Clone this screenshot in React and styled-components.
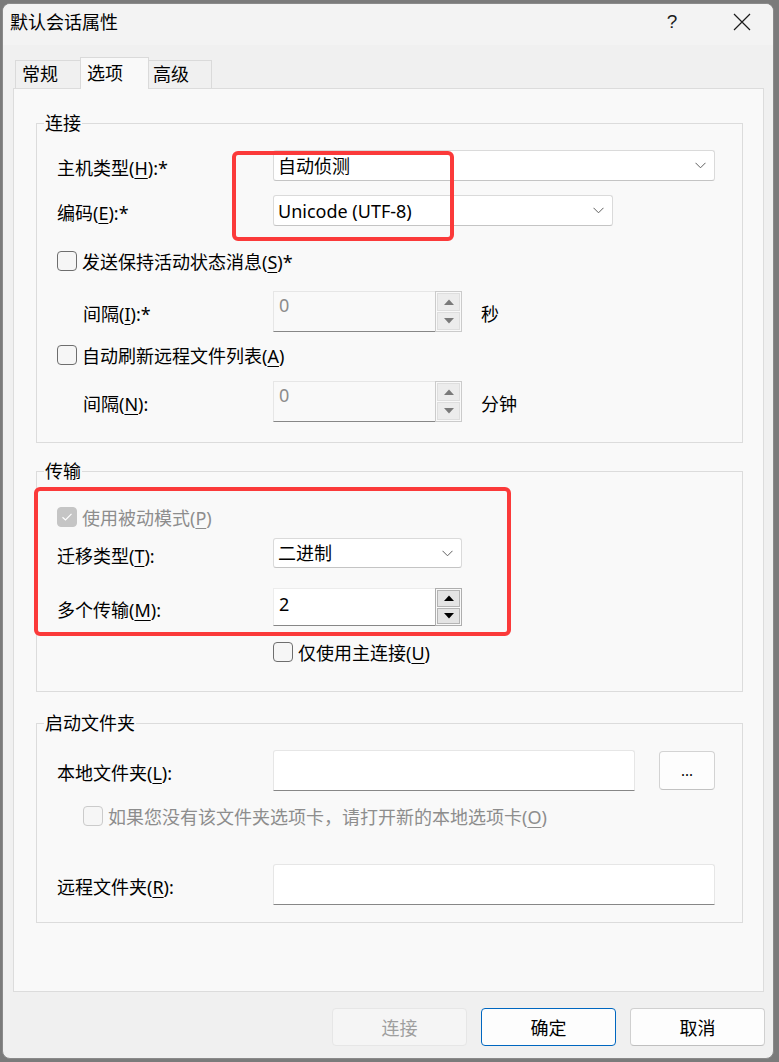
import React from "react";
import styled, { createGlobalStyle } from "styled-components";

const GlobalStyle = createGlobalStyle`
  * {
    box-sizing: border-box;
  }
  html, body {
    margin: 0;
    padding: 0;
    background: #7b7b7b;
  }
  body {
    width: 779px;
    height: 1062px;
    overflow: hidden;
    font-family: "Noto Sans", "Noto Sans CJK SC", sans-serif;
    font-size: 18px;
    color: #000;
  }
  u {
    text-decoration-thickness: 1px;
    text-underline-offset: 3px;
  }
`;

const Window = styled.div`
  position: relative;
  margin: 3px 0 0 2px;
  width: 772px;
  height: 1056px;
  border: 1px solid #8a8a8a;
  border-radius: 8px;
  background: #f0f0f0;
  overflow: hidden;
  display: flex;
  flex-direction: column;
`;

const TitleBar = styled.div`
  height: 41px;
  background: #f3f3f3;
  display: flex;
  align-items: flex-start;
  padding: 6px 8px 0 7px;
`;

const Title = styled.div`
  line-height: 24px;
  flex: 1;
`;

const TitleButtons = styled.div`
  display: flex;
  gap: 24px;
`;

const TitleButton = styled.div`
  width: 46px;
  height: 24px;
  display: flex;
  align-items: center;
  justify-content: center;
  font-family: "Liberation Sans", sans-serif;
  font-size: 19px;
  font-weight: 300;
  color: #1b1b1b;
`;

const Content = styled.div`
  flex: 1;
  padding: 12px 8px 0 10px;
  display: flex;
  flex-direction: column;
`;

const TabStrip = styled.div`
  height: 31px;
  display: flex;
  align-items: flex-end;
  padding-left: 2px;
`;

const Tab = styled.div`
  position: relative;
  z-index: ${(p) => (p.$active ? 2 : 1)};
  width: ${(p) => p.$w}px;
  height: ${(p) => (p.$active ? 32 : 28)}px;
  margin-right: -1px;
  margin-bottom: ${(p) => (p.$active ? -1 : 0)}px;
  padding-left: ${(p) => p.$pl}px;
  padding-top: ${(p) => (p.$active ? 2 : 0)}px;
  border: 1px solid #dadada;
  border-bottom: none;
  background: ${(p) => (p.$active ? "#f9f9f9" : "#f0f0f0")};
  line-height: 26px;
`;

const Panel = styled.div`
  width: 751px;
  height: 904px;
  border: 1px solid #dcdcdc;
  background: #f9f9f9;
  padding: 22px 20px 0 22px;
  display: flex;
  flex-direction: column;
`;

const Group = styled.fieldset`
  margin: ${(p) => p.$mt || 0}px 0 0 0;
  padding: ${(p) => p.$pt}px 20px ${(p) => p.$pb}px 20px;
  border: 1px solid #dcdcdc;
  min-width: 0;
`;

const GroupTitle = styled.legend`
  padding: 0 1px;
  margin-left: -13px;
  line-height: 24px;
`;

const Row = styled.div`
  display: flex;
  align-items: center;
  height: ${(p) => p.$h}px;
  margin-top: ${(p) => p.$mt || 0}px;
  padding-left: ${(p) => p.$indent || 0}px;
`;

const Label = styled.div`
  width: ${(p) => 216 - (p.$indent || 0)}px;
  margin-left: ${(p) => p.$indent || 0}px;
  padding-top: 3px;
  white-space: nowrap;
`;

const Combo = styled.div`
  width: ${(p) => p.$w}px;
  height: 100%;
  background: #fff;
  border: 1px solid #dadada;
  border-bottom-color: #c4c4c4;
  border-radius: 3px;
  display: flex;
  align-items: center;
  justify-content: space-between;
  padding: 0 8px 0 4px;
  line-height: 24px;
`;

const Chevron = () => (
  <svg width="11" height="7" viewBox="0 0 11 7">
    <path d="M0.5 0.8 L5.5 5.8 L10.5 0.8" fill="none" stroke="#5f5f5f" strokeWidth="1" />
  </svg>
);

const Spin = styled.div`
  width: 189px;
  height: 100%;
  display: flex;
`;

const SpinField = styled.div`
  flex: 1;
  background: ${(p) => (p.$disabled ? "#f9f9f9" : "#fff")};
  border: 1px solid ${(p) => (p.$disabled ? "#e6e6e6" : "#ececec")};
  border-bottom-color: #878787;
  border-right: none;
  padding: ${(p) => (p.$disabled ? 1 : 3)}px 0 0 5px;
  line-height: 24px;
  color: ${(p) => (p.$disabled ? "#8c8c8c" : "#000")};
`;

const SpinButtons = styled.div`
  width: 27px;
  display: flex;
  flex-direction: column;
  gap: 1px;
  padding: 1px;
  border: 1px solid ${(p) => (p.$disabled ? "#cbcbcb" : "#aeaeae")};
`;

const SpinButton = styled.div`
  flex: 1;
  display: flex;
  align-items: center;
  justify-content: center;
  border: 1px solid ${(p) => (p.$disabled ? "#dedede" : "#b4b4b4")};
  background: ${(p) => (p.$disabled ? "#ececec" : "#e4e4e4")};
`;

const Arrow = ({ up, disabled }) => (
  <svg width="10" height="6" viewBox="0 0 10 6">
    <path
      d={up ? "M0 6 L5 0.5 L10 6 Z" : "M0 0 L5 5.5 L10 0 Z"}
      fill={disabled ? "#7a7a7a" : "#000"}
    />
  </svg>
);

const SpinBox = ({ value, disabled }) => (
  <Spin>
    <SpinField $disabled={disabled}>{value}</SpinField>
    <SpinButtons $disabled={disabled}>
      <SpinButton $disabled={disabled}>
        <Arrow up disabled={disabled} />
      </SpinButton>
      <SpinButton $disabled={disabled}>
        <Arrow disabled={disabled} />
      </SpinButton>
    </SpinButtons>
  </Spin>
);

const Unit = styled.span`
  margin-left: 19px;
  padding-top: 2px;
`;

const TextField = styled.div`
  width: ${(p) => p.$w}px;
  height: 100%;
  background: #fff;
  border: 1px solid #e6e6e6;
  border-bottom-color: #878787;
  border-radius: 3px 3px 0 0;
`;

const BrowseButton = styled.div`
  width: 56px;
  height: 39px;
  margin-left: 24px;
  background: #fdfdfd;
  border: 1px solid #d3d3d3;
  border-bottom-color: #c2c2c2;
  border-radius: 4px;
  display: flex;
  align-items: center;
  justify-content: center;
  font-size: 15px;
  padding-bottom: 2px;
`;

const CheckLine = styled.label`
  display: flex;
  align-items: center;
  gap: 5px;
  color: ${(p) => (p.$disabled ? "#8d8d8d" : "#000")};
  white-space: nowrap;
`;

const Box = styled.span`
  width: 20px;
  height: 20px;
  border-radius: 4px;
  border: 1px solid ${(p) => (p.$checked ? "#c5c5c5" : p.$disabled ? "#cbcbcb" : "#6e6e6e")};
  background: ${(p) => (p.$checked ? "#c5c5c5" : "#f6f6f6")};
  display: flex;
  align-items: center;
  justify-content: center;
`;

const CheckBox = ({ checked, disabled, children }) => (
  <CheckLine $disabled={disabled}>
    <Box $checked={checked} $disabled={disabled}>
      {checked && (
        <svg width="12" height="10" viewBox="0 0 12 10">
          <path d="M1.5 5.2 L4.5 8 L10.5 1.8" fill="none" stroke="#fff" strokeWidth="1.2" />
        </svg>
      )}
    </Box>
    <span>{children}</span>
  </CheckLine>
);

const ButtonRow = styled.div`
  display: flex;
  justify-content: flex-end;
  gap: 14px;
  margin-top: 16px;
`;

const DialogButton = styled.div`
  width: 135px;
  height: 38px;
  border-radius: 4px;
  display: flex;
  align-items: center;
  justify-content: center;
  background: ${(p) => (p.$disabled ? "#f5f5f5" : "#fdfdfd")};
  border: 1px solid
    ${(p) => (p.$primary ? "#0067c0" : p.$disabled ? "#e6e6e6" : "#d0d0d0")};
  border-bottom-color: ${(p) => (p.$primary ? "#0067c0" : p.$disabled ? "#e6e6e6" : "#bfbfbf")};
  color: ${(p) => (p.$disabled ? "#9e9e9e" : "#000")};
`;

const Highlight = styled.div`
  position: absolute;
  left: ${(p) => p.$x}px;
  top: ${(p) => p.$y}px;
  width: ${(p) => p.$w}px;
  height: ${(p) => p.$h}px;
  border: 4px solid #fb3a3a;
  border-radius: 6px;
  pointer-events: none;
`;

const tabs = [
  { name: "常规", w: 66, pl: 6 },
  { name: "选项", w: 69, pl: 6, active: true },
  { name: "高级", w: 64, pl: 4 },
];

export default function App() {
  return (
    <>
      <GlobalStyle />
      <Window>
        <TitleBar>
          <Title>默认会话属性</Title>
          <TitleButtons>
            <TitleButton>?</TitleButton>
            <TitleButton>
              <svg width="18" height="18" viewBox="0 0 18 18">
                <path d="M1 1 L17 17 M17 1 L1 17" stroke="#1b1b1b" strokeWidth="1.2" />
              </svg>
            </TitleButton>
          </TitleButtons>
        </TitleBar>

        <Content>
          <TabStrip>
            {tabs.map((t) => (
              <Tab key={t.name} $w={t.w} $pl={t.pl} $active={t.active}>
                {t.name}
              </Tab>
            ))}
          </TabStrip>

          <Panel>
            <Group $pt={15} $pb={20}>
              <GroupTitle>连接</GroupTitle>
              <Row $h={31}>
                <Label>主机类型(<u>H</u>):*</Label>
                <Combo $w={442}>
                  <span>自动侦测</span>
                  <Chevron />
                </Combo>
              </Row>
              <Row $h={31} $mt={14}>
                <Label>编码(<u>E</u>):*</Label>
                <Combo $w={340}>
                  <span>Unicode (UTF-8)</span>
                  <Chevron />
                </Combo>
              </Row>
              <Row $h={30} $mt={20}>
                <CheckBox>发送保持活动状态消息(<u>S</u>)*</CheckBox>
              </Row>
              <Row $h={41} $mt={15}>
                <Label $indent={26}>间隔(<u>I</u>):*</Label>
                <SpinBox value="0" disabled />
                <Unit>秒</Unit>
              </Row>
              <Row $h={30} $mt={8}>
                <CheckBox>自动刷新远程文件列表(<u>A</u>)</CheckBox>
              </Row>
              <Row $h={41} $mt={11}>
                <Label $indent={26}>间隔(<u>N</u>):</Label>
                <SpinBox value="0" disabled />
                <Unit>分钟</Unit>
              </Row>
            </Group>

            <Group $mt={16} $pt={19} $pb={24}>
              <GroupTitle>传输</GroupTitle>
              <Row $h={30}>
                <CheckBox checked disabled>
                  使用被动模式(<u>P</u>)
                </CheckBox>
              </Row>
              <Row $h={30} $mt={6}>
                <Label>迁移类型(<u>T</u>):</Label>
                <Combo $w={189}>
                  <span>二进制</span>
                  <Chevron />
                </Combo>
              </Row>
              <Row $h={38} $mt={20}>
                <Label>多个传输(<u>M</u>):</Label>
                <SpinBox value="2" />
              </Row>
              <Row $h={30} $mt={11} $indent={216}>
                <CheckBox>仅使用主连接(<u>U</u>)</CheckBox>
              </Row>
            </Group>

            <Group $mt={19} $pt={15} $pb={17}>
              <GroupTitle>启动文件夹</GroupTitle>
              <Row $h={41}>
                <Label>本地文件夹(<u>L</u>):</Label>
                <TextField $w={362} />
                <BrowseButton>...</BrowseButton>
              </Row>
              <Row $h={30} $mt={10} $indent={26}>
                <CheckBox disabled>
                  如果您没有该文件夹选项卡，请打开新的本地选项卡(<u>O</u>)
                </CheckBox>
              </Row>
              <Row $h={41} $mt={33}>
                <Label>远程文件夹(<u>R</u>):</Label>
                <TextField $w={442} />
              </Row>
            </Group>
          </Panel>

          <ButtonRow>
            <DialogButton $disabled>连接</DialogButton>
            <DialogButton $primary>确定</DialogButton>
            <DialogButton>取消</DialogButton>
          </ButtonRow>
        </Content>

        <Highlight $x={229} $y={147} $w={222} $h={90} />
        <Highlight $x={31} $y={483} $w={477} $h={149} />
      </Window>
    </>
  );
}
